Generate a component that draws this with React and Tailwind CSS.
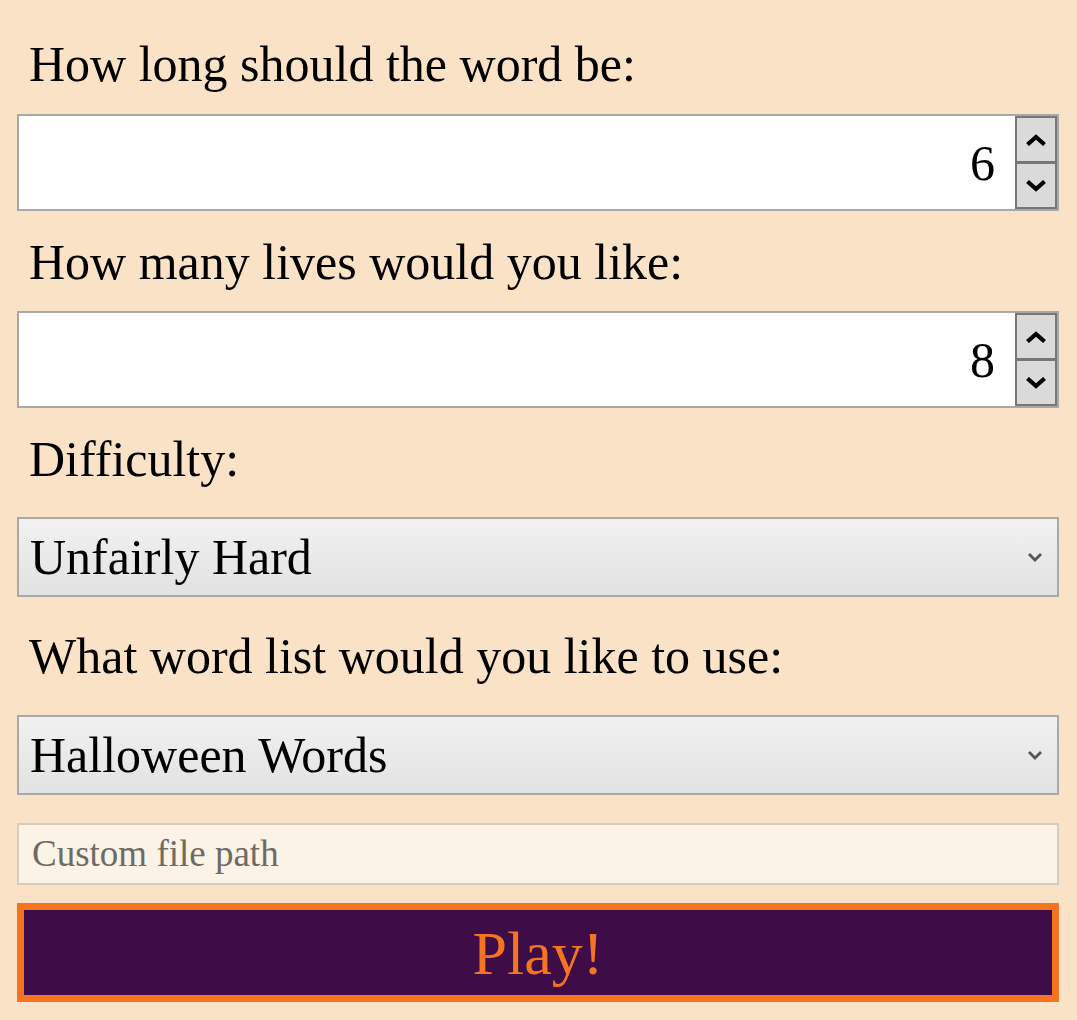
import React from "react";

function Label({ children, className = "" }) {
  return (
    <div className={`pl-[12px] text-[50px] leading-[56px] text-black whitespace-nowrap ${className}`}>
      {children}
    </div>
  );
}

function Chevron({ up }) {
  return (
    <svg width="22" height="12" viewBox="0 0 22 12">
      {up ? (
        <path d="M2.5 10.5 L11 3 L19.5 10.5" fill="none" stroke="#000" strokeWidth="4.2" strokeLinejoin="miter" />
      ) : (
        <path d="M2.5 1.5 L11 9 L19.5 1.5" fill="none" stroke="#000" strokeWidth="4.2" strokeLinejoin="miter" />
      )}
    </svg>
  );
}

function NumberField({ value, className = "" }) {
  return (
    <div className={`h-[97px] border-2 border-[#a8a8a8] bg-white flex items-stretch ${className}`}>
      <div className="flex-1 flex items-center justify-end pr-[20px] text-[50px] leading-[56px] text-black">
        {value}
      </div>
      <div className="w-[42px] flex flex-col border-2 border-[#777777] bg-[#dadada]">
        <div className="flex-1 flex items-center justify-center border-b-[3px] border-[#777777]">
          <Chevron up />
        </div>
        <div className="flex-1 flex items-center justify-center">
          <Chevron />
        </div>
      </div>
    </div>
  );
}

function SelectField({ value, className = "" }) {
  return (
    <div className={`h-[80px] border-2 border-[#a9a9a9] bg-gradient-to-b from-[#f1f1f1] to-[#e2e2e2] flex items-center pl-[11px] pr-[14px] ${className}`}>
      <div className="flex-1 text-[50px] leading-[56px] text-black whitespace-nowrap">{value}</div>
      <svg width="16" height="10" viewBox="0 0 16 10">
        <path d="M2 2 L8 8 L14 2" fill="none" stroke="#555" strokeWidth="2.8" />
      </svg>
    </div>
  );
}

export default function App() {
  return (
    <div className="min-h-[1020px] w-full bg-[#f9e2c6] pl-[17px] pr-[18px] pt-[36px] pb-[18px] font-['Liberation_Serif','Times_New_Roman',serif]">
      <Label>How long should the word be:</Label>
      <NumberField value="6" className="mt-[22px]" />
      <Label className="mt-[23px]">How many lives would you like:</Label>
      <NumberField value="8" className="mt-[21px]" />
      <Label className="mt-[23px]">Difficulty:</Label>
      <SelectField value="Unfairly Hard" className="mt-[30px]" />
      <Label className="mt-[31px]">What word list would you like to use:</Label>
      <SelectField value="Halloween Words" className="mt-[31px]" />
      <div className="mt-[28px] h-[62px] border-2 border-[#d6cbbd] bg-[#fcf3e7] flex items-center pl-[13px] text-[37px] leading-[42px] text-[#6f6a63]">
        Custom file path
      </div>
      <button className="mt-[18px] w-full h-[99px] border-[7px] border-[#f47421] bg-[#3e0c47] flex items-center justify-center text-[62px] leading-[70px] text-[#f47421] font-['Liberation_Serif','Times_New_Roman',serif]">
        Play!
      </button>
    </div>
  );
}
